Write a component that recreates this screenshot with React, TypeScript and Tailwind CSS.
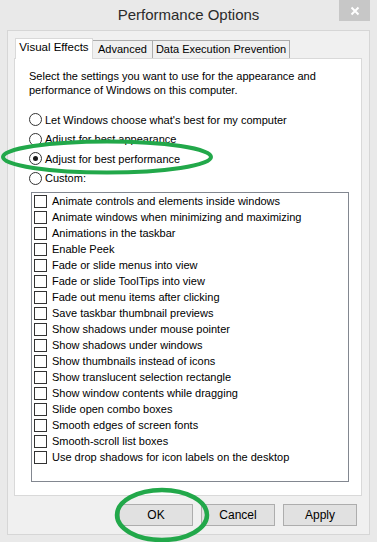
import React from "react"

const FONT = { fontFamily: '"Segoe UI", "Liberation Sans", Arial, sans-serif' }

const RADIOS = [
  { label: "Let Windows choose what's best for my computer", checked: false },
  { label: "Adjust for best appearance", checked: false },
  { label: "Adjust for best performance", checked: true },
  { label: "Custom:", checked: false },
]

const EFFECTS = [
  "Animate controls and elements inside windows",
  "Animate windows when minimizing and maximizing",
  "Animations in the taskbar",
  "Enable Peek",
  "Fade or slide menus into view",
  "Fade or slide ToolTips into view",
  "Fade out menu items after clicking",
  "Save taskbar thumbnail previews",
  "Show shadows under mouse pointer",
  "Show shadows under windows",
  "Show thumbnails instead of icons",
  "Show translucent selection rectangle",
  "Show window contents while dragging",
  "Slide open combo boxes",
  "Smooth edges of screen fonts",
  "Smooth-scroll list boxes",
  "Use drop shadows for icon labels on the desktop",
]

function Radio({ checked }: { checked: boolean }) {
  return (
    <span className="flex h-[13px] w-[13px] shrink-0 items-center justify-center rounded-full border border-[#333333] bg-white">
      {checked && <span className="h-[5px] w-[5px] rounded-full bg-[#1a1a1a]" />}
    </span>
  )
}

function Button({ children }: { children: React.ReactNode }) {
  return (
    <button className="flex h-[22px] w-[74px] items-center justify-center border border-[#adadad] bg-[#e1e1e1] text-[12px] text-black">
      {children}
    </button>
  )
}

export default function App() {
  return (
    <div className="relative h-[542px] w-[377px] overflow-hidden bg-[#e9e9e9] text-black" style={FONT}>
      {/* Title bar */}
      <div className="flex h-[30px] items-center justify-center text-[15px] text-[#2b2b2b]">
        Performance Options
      </div>
      <div className="absolute right-[7px] top-0 flex h-[21px] w-[31px] items-center justify-center bg-[#c7c7c7]">
        <svg width="10" height="10" viewBox="0 0 10 10">
          <path d="M1.5 1.5 L8.5 8.5 M8.5 1.5 L1.5 8.5" stroke="#ffffff" strokeWidth="2" />
        </svg>
      </div>

      {/* Client area */}
      <div className="ml-[7px] flex h-[505px] w-[363px] flex-col border border-[#d6d6d6] bg-[#f0f0f0] px-[6px] pt-[7px]">
        {/* Tabs */}
        <div className="flex items-end whitespace-nowrap pl-[1px] text-[11px]">
          <div className="relative z-10 -mb-px flex h-[21px] w-[78px] items-center justify-center border border-b-0 border-[#d9d9d9] bg-white pb-[2px] text-[11.5px]">
            Visual Effects
          </div>
          <div className="flex h-[18px] w-[60px] items-center justify-center border border-b-0 border-l-0 border-[#acacac] bg-[#f0f0f0]">
            Advanced
          </div>
          <div className="flex h-[18px] w-[137px] items-center justify-center border border-b-0 border-l-0 border-[#acacac] bg-[#f0f0f0]">
            Data Execution Prevention
          </div>
        </div>

        {/* Tab panel */}
        <div className="flex h-[438px] w-[348px] flex-col whitespace-nowrap border border-[#d9d9d9] bg-white pl-[14px] pt-[10px] text-[11px]">
          <p className="leading-[14px]">
            Select the settings you want to use for the appearance and
            <br />
            performance of Windows on this computer.
          </p>
          <div className="mt-[13px] flex flex-col">
            {RADIOS.map((r) => (
              <div key={r.label} className="flex h-[19.5px] items-center gap-[3px]">
                <Radio checked={r.checked} />
                <span>{r.label}</span>
              </div>
            ))}
          </div>
          <div className="ml-[2px] mt-[4px] flex h-[290px] w-[318px] flex-col border border-[#828790] pl-[2px]">
            {EFFECTS.map((e) => (
              <div key={e} className="flex h-[16px] items-center gap-[5px]">
                <span className="h-[13px] w-[13px] shrink-0 border border-[#333333] bg-white" />
                <span>{e}</span>
              </div>
            ))}
          </div>
        </div>

        {/* Buttons */}
        <div className="mt-[8px] flex justify-end gap-[8px] pr-[6px]">
          <Button>OK</Button>
          <Button>Cancel</Button>
          <Button>Apply</Button>
        </div>
      </div>

      {/* Annotation ellipses */}
      <svg className="pointer-events-none absolute left-0 top-0" width="377" height="542">
        <ellipse cx="107" cy="157" rx="104" ry="15.5" fill="none" stroke="#22a84a" strokeWidth="4" />
        <ellipse cx="162" cy="515" rx="45" ry="25" fill="none" stroke="#22a84a" strokeWidth="4.5" />
      </svg>
    </div>
  )
}
